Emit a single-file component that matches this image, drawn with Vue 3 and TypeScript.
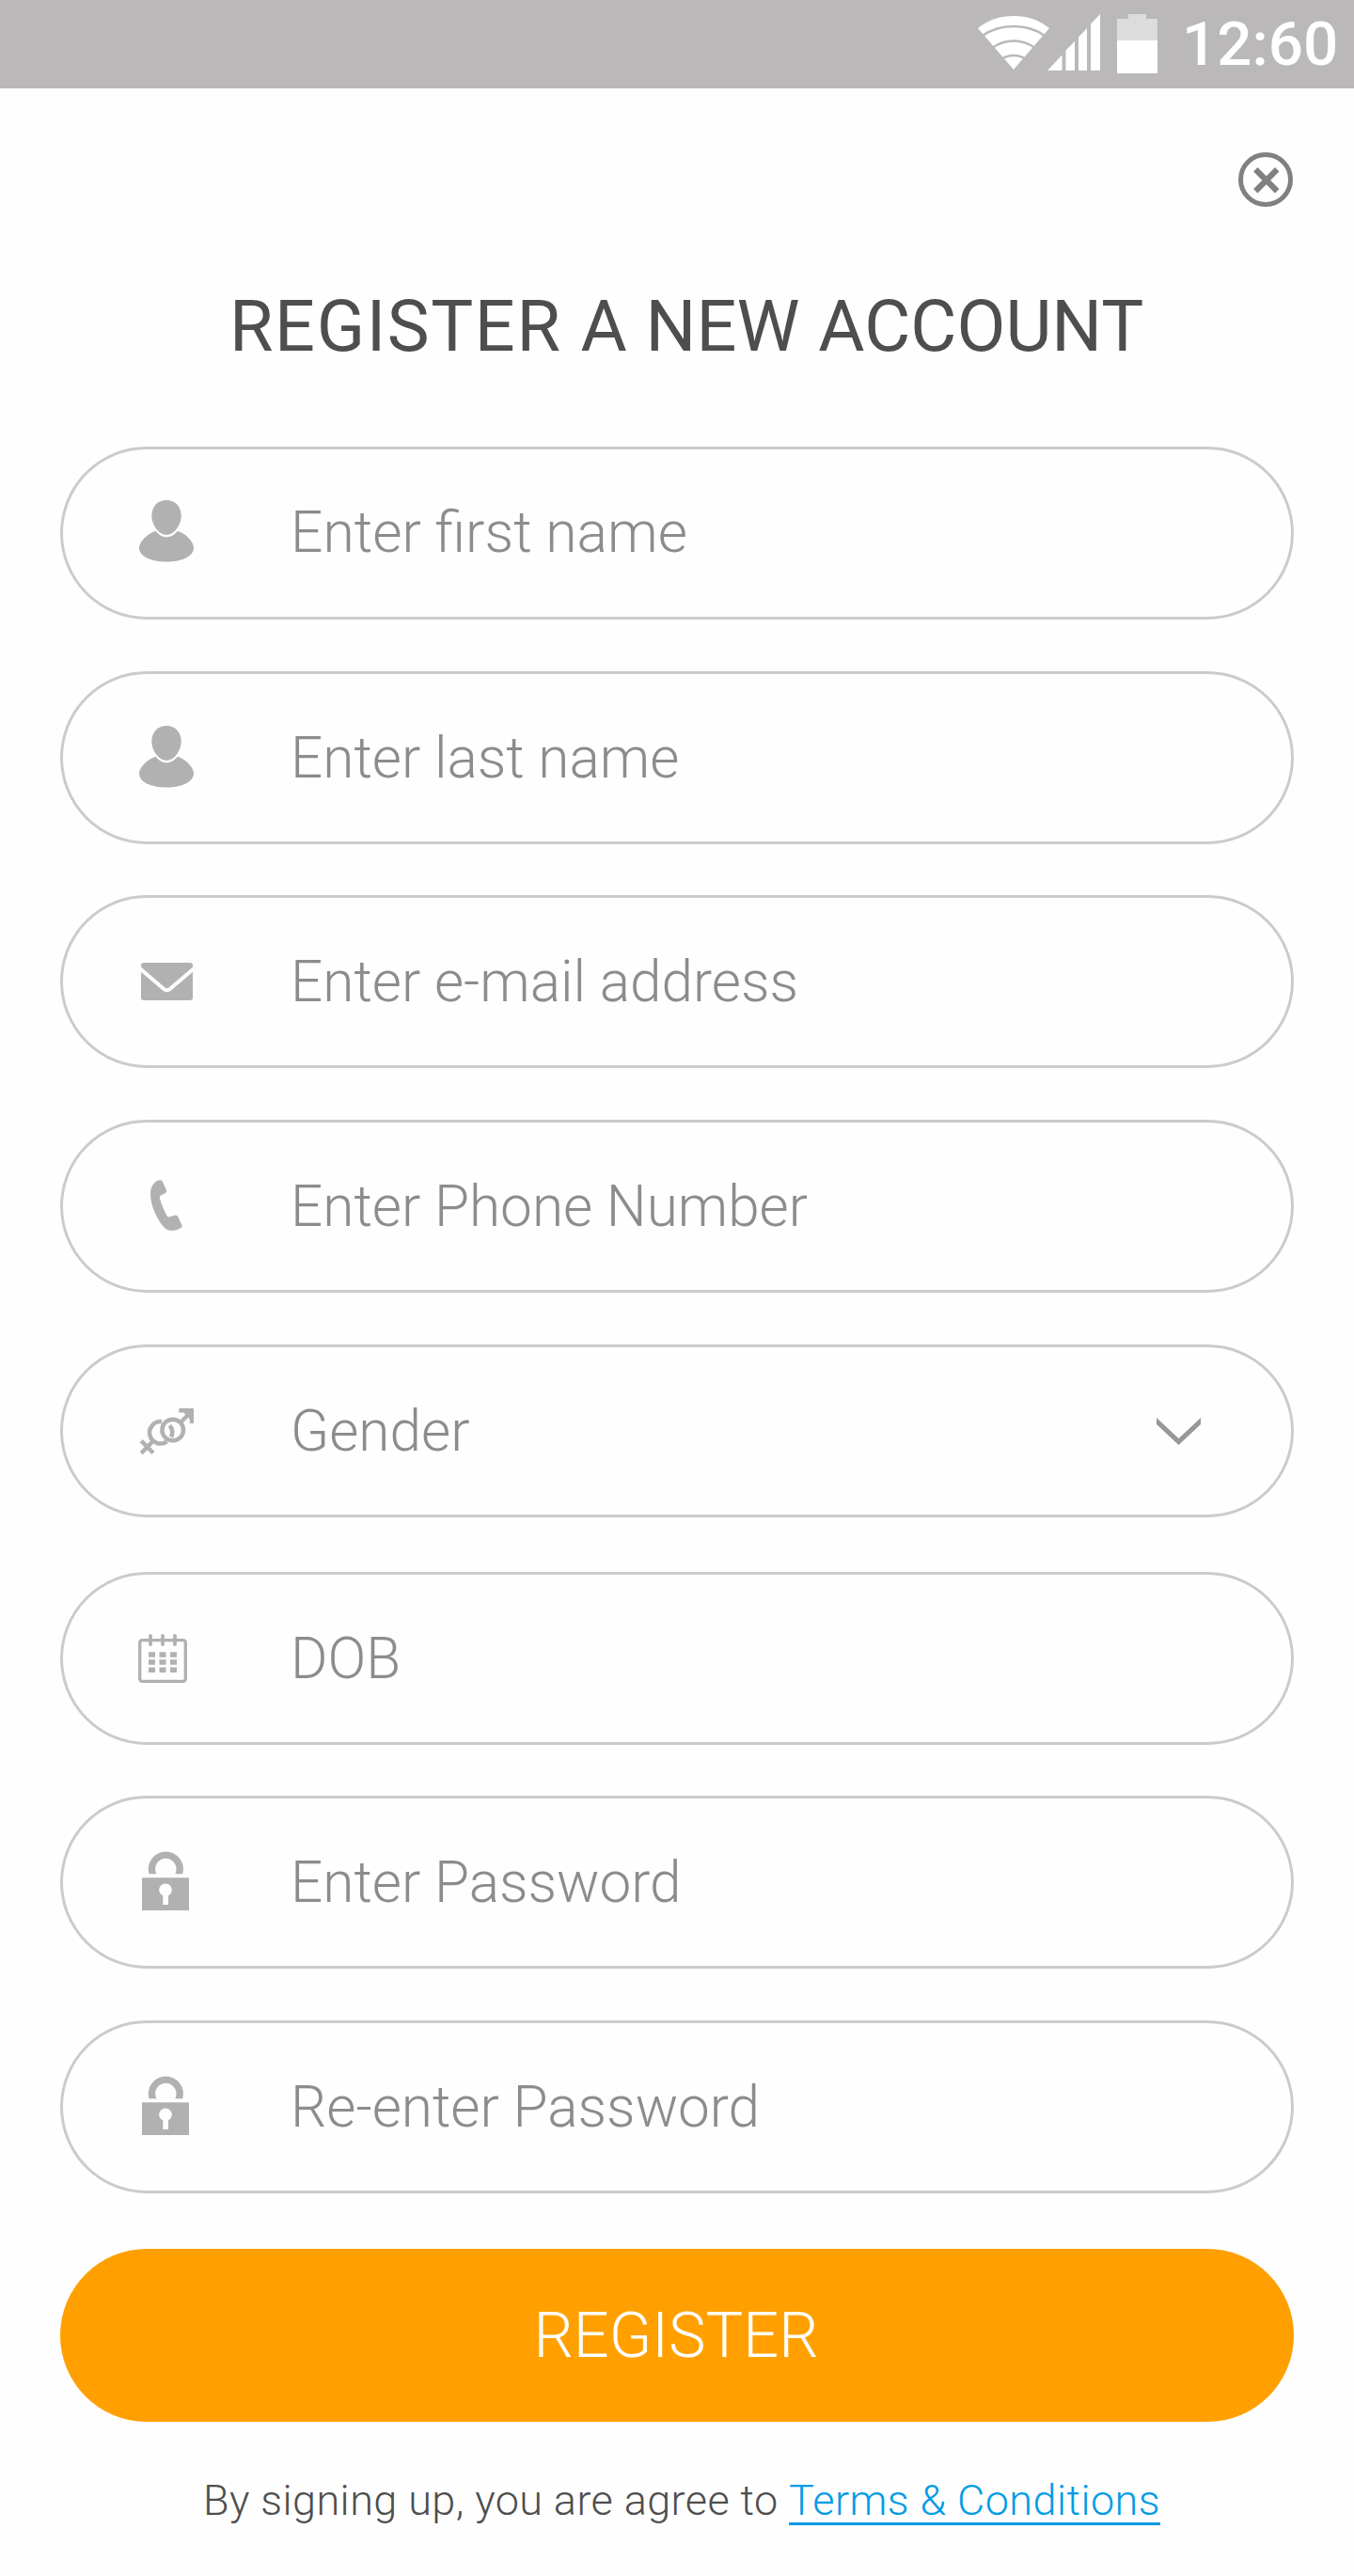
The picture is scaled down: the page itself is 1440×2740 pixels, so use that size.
<script setup lang="ts">
type Icon = 'user' | 'mail' | 'phone' | 'gender' | 'calendar' | 'lock'

interface Field {
  label: string
  icon: Icon
  select?: boolean
}

const fields: Field[] = [
  { label: 'Enter first name', icon: 'user' },
  { label: 'Enter last name', icon: 'user' },
  { label: 'Enter e-mail address', icon: 'mail' },
  { label: 'Enter Phone Number', icon: 'phone' },
  { label: 'Gender', icon: 'gender', select: true },
  { label: 'DOB', icon: 'calendar' },
  { label: 'Enter Password', icon: 'lock' },
  { label: 'Re-enter Password', icon: 'lock' },
]
</script>

<template>
  <div class="screen">
    <header class="status">
      <svg class="signals" width="196" height="94" viewBox="1036 0 196 94">
        <g fill="#fff">
          <path d="M1040 30Q1056 17 1078 17T1116 30L1078 74Z" />
          <path d="M1114 75L1129.500 58.500V75ZM1133.500 75V53.500L1143 44V75ZM1147 75V39.500L1156 30V75ZM1160 75V25.500L1170 15V75Z" />
          <path d="M1188 43H1231V78H1188Z" />
        </g>
        <path d="M1188 20H1200V15H1219V20H1231V43H1188Z" fill="#dcdcdc" />
        <g fill="none" stroke="#bab8b9" stroke-width="2.700">
          <path d="M1045 38Q1059 28 1078 28T1111 38" />
          <path d="M1056 50.500Q1066 43.500 1078 43.500T1100 50.500" />
          <path d="M1066 62.500Q1071 59 1078 59T1090 62.500" />
        </g>
      </svg>
      <span class="clock">12:60</span>
    </header>

    <div class="toolbar">
      <button class="close" aria-label="Close">
        <svg width="58" height="58" viewBox="0 0 58 58" fill="none" stroke="#808080">
          <circle cx="29" cy="29" r="26.500" stroke-width="5" />
          <path d="M18.300 18.300L41.200 41.200M41.200 18.300L18.300 41.200" stroke-width="6.200" />
        </svg>
      </button>
    </div>

    <h1 class="title"><span class="lead">REGISTER</span> A NEW ACCOUNT</h1>

    <form class="form" @submit.prevent>
      <div
        v-for="(field, i) in fields"
        :key="field.label"
        class="field"
        :class="'f' + i"
      >
        <svg class="icon" width="70" height="80" viewBox="0 0 70 80">
          <g v-if="field.icon === 'user'" fill="#b1b1b1" :transform="i ? 'translate(0 -2)' : 'translate(0 -3)'">
            <path d="M35 8C44 8 50.700 14.500 50.700 24.500C50.700 34 43.500 44.800 35 44.800S19.300 34 19.300 24.500C19.300 14.500 26 8 35 8Z" />
            <path d="M23.500 40.700C26.500 44.500 30.500 47.200 35 47.200S44 44.500 47 40.700C56.500 44 64 52.500 64 58.500C64 67.500 52 73.500 35 73.500S6 67.500 6 58.500C6 52.500 14 44 23.500 40.700Z" />
          </g>
          <g v-else-if="field.icon === 'mail'">
            <rect x="8" y="20" width="55" height="40" rx="3" fill="#b1b1b1" />
            <path d="M6 25.500L32 47.700Q35.500 50.500 39 47.700L65 25.500" fill="none" stroke="#fefefe" stroke-width="4" />
          </g>
          <path
            v-else-if="field.icon === 'phone'"
            transform="translate(4 0)"
            fill="#b1b1b1"
            d="M24 12.200Q26 12 26.800 13.500L31 23Q31.500 25.200 29.500 26.200L25 28.500Q23.200 29.500 24 32C25.500 37.500 28.500 44.500 31.500 50Q32.500 52 34.500 51.300L40.500 49.500Q42.300 49.300 43.200 51L47.600 60.500Q48 62.200 46.500 63C39.500 67.500 32 66.800 28 62C20 52.500 14 38 14 27C14 19 18 13 24 12.200Z"
          />
          <g v-else-if="field.icon === 'gender'" fill="none" stroke="#b1b1b1" stroke-width="4.500">
            <circle cx="41.700" cy="39" r="11.300" />
            <path d="M50 31L60 21" />
            <path d="M48.300 16H64V32H59.800V28L57 24L53 20.500H48.300Z" fill="#b1b1b1" stroke="none" />
            <path d="M30 30.200A11.700 11.700 0 1 0 35.500 51.400" />
            <path d="M22.500 49L8.200 63.700M8.200 50.700L21 63.500" />
            <path d="M38.500 34.200Q43 39.500 40 46.500" />
          </g>
          <g v-else-if="field.icon === 'calendar'">
            <rect x="6.700" y="20.700" width="48.600" height="43.600" rx="2.500" fill="none" stroke="#b1b1b1" stroke-width="3.300" />
            <path d="M18 16V25M31 16V25M44 16V25" stroke="#b1b1b1" stroke-width="3.800" stroke-linecap="round" />
            <path d="M16 36H46M16 44H46M16 52.200H46" stroke="#b1b1b1" stroke-width="5.400" stroke-dasharray="7 4.500" />
          </g>
          <g v-else>
            <path d="M16.500 31.300A18.600 18.600 0 1 1 52.200 31.300H44.200A11.200 11.200 0 1 0 24.400 31.300Z" fill="#b1b1b1" />
            <path d="M9 35.300H59V70H9Z" fill="#b1b1b1" />
            <circle cx="34" cy="48.300" r="6.800" fill="#fefefe" />
            <path d="M31.300 52H37V64H31.300Z" fill="#fefefe" />
          </g>
        </svg>
        <span class="label">{{ field.label }}</span>
        <svg v-if="field.select" class="chevron" width="47" height="30" viewBox="0 0 47 30">
          <path d="M0 0L23.500 22L47 0V7L23.500 29L0 7Z" fill="#989898" />
        </svg>
      </div>
      <button class="submit"><span>REGISTER</span></button>
    </form>

    <p class="terms">By signing up, you are agree to <a>Terms &amp; Conditions</a></p>
  </div>
</template>

<style>
body {
  margin: 0;
  background: #fefefe;
}
</style>

<style scoped>
.screen {
  width: 1440px;
  height: 2740px;
  overflow: hidden;
  background: #fefefe;
  font-family: Roboto, sans-serif;
}
.status {
  height: 94px;
  display: flex;
  justify-content: flex-end;
  box-sizing: border-box;
  padding-right: 16px;
  background: #bab8b9;
}
.signals {
  flex: none;
  margin-right: 25px;
  margin-left: -1px;
}
.clock {
  width: 167px;
  white-space: nowrap;
  font-size: 65.5px;
  line-height: 94px;
  letter-spacing: 0;
  color: #fff;
  font-weight: 500;
}
.toolbar {
  display: flex;
  justify-content: flex-end;
  padding: 68px 65px 0 0;
}
.close {
  display: block;
  border: 0;
  padding: 0;
  background: none;
  line-height: 0;
}
.title {
  height: 90px;
  margin: 82px 0 83px 244px;
  font-size: 75.5px;
  line-height: 90px;
  word-spacing: 1.2px;
  font-weight: 400;
  color: #4e4e4e;
  white-space: nowrap;
}
.lead {
  letter-spacing: 1.6px;
}
.form {
  display: flex;
  flex-direction: column;
  padding: 0 64px;
}
.field {
  height: 184px;
  box-sizing: border-box;
  border: 3px solid #cbcbcb;
  border-radius: 92px;
  margin-bottom: 55px;
  padding: 0 96px 0 75px;
  display: flex;
  align-items: center;
}
.f1 {
  margin-bottom: 54px;
}
.f4 {
  margin-bottom: 58px;
}
.f5 {
  margin-bottom: 54px;
}
.f7 {
  margin-bottom: 59px;
}
.icon {
  flex: none;
  margin-right: 97px;
}
.label {
  flex: 1;
  padding-top: 2px;
  font-size: 60.25px;
  line-height: 80px;
  font-weight: 300;
  color: #8c8c8c;
  white-space: nowrap;
}
.f0 .label {
  padding-top: 0;
  font-size: 60.5px;
}
.chevron {
  margin-top: 2px;
}
.submit {
  height: 184px;
  border: 0;
  border-radius: 92px;
  padding: 0 2px 0 0;
  background: #ffa000;
  color: #fff;
  font-family: inherit;
  font-weight: 300;
  font-size: 66.6px;
}
.terms {
  margin: 56px 0 0 216px;
  font-size: 45px;
  line-height: 56px;
  letter-spacing: 0.43px;
  font-weight: 300;
  color: #4e4e4e;
  white-space: nowrap;
}
.terms a {
  display: inline-block;
  line-height: 47px;
  color: #039be5;
  border-bottom: 3px solid #039be5;
}
</style>
